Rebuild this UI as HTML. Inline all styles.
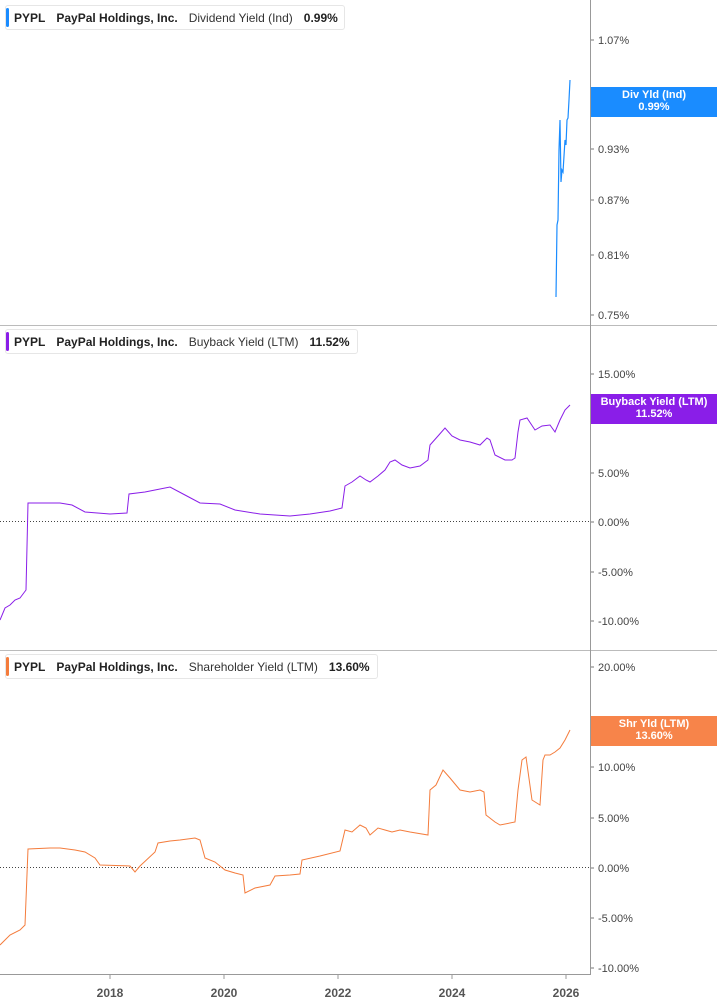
<!DOCTYPE html><html><head><meta charset="utf-8"><style>
body{margin:0;width:717px;height:1005px;background:#fff;font-family:"Liberation Sans",sans-serif;overflow:hidden;position:relative}
svg{position:absolute;left:0;top:0}
.lg{position:absolute;left:5px;height:25px;border:1px solid #e6e6e6;border-radius:3px;background:#fff;font-size:12px;font-weight:bold;color:#222;line-height:25px;padding-left:8px;white-space:nowrap;box-sizing:border-box}
.lg:before{content:"";position:absolute;left:0;top:2px;bottom:2px;width:3px;background:var(--c);border-radius:2px}
.lg span{margin-right:11px}.lg .n{font-weight:normal;color:#333}
.tg{position:absolute;left:591px;width:126px;color:#fff;font-size:11px;font-weight:bold;text-align:center;line-height:12px;padding-top:2px;box-sizing:border-box}
</style></head><body>
<svg width="717" height="1005" font-family="Liberation Sans" font-size="11" fill="#444">
<line x1="0" y1="325.5" x2="717" y2="325.5" stroke="#bbb"/>
<line x1="0" y1="650.5" x2="717" y2="650.5" stroke="#bbb"/>
<line x1="590.5" y1="0" x2="590.5" y2="975" stroke="#999"/>
<line x1="0" y1="974.5" x2="591" y2="974.5" stroke="#999"/>
<line x1="0" y1="521.5" x2="590" y2="521.5" stroke="#444" stroke-dasharray="1,2"/>
<line x1="0" y1="867.5" x2="590" y2="867.5" stroke="#444" stroke-dasharray="1,2"/>
<g stroke="#777">
<line x1="591" y1="40" x2="594" y2="40"/><line x1="591" y1="149" x2="594" y2="149"/><line x1="591" y1="200" x2="594" y2="200"/><line x1="591" y1="255" x2="594" y2="255"/><line x1="591" y1="315" x2="594" y2="315"/>
<line x1="591" y1="374" x2="594" y2="374"/><line x1="591" y1="473" x2="594" y2="473"/><line x1="591" y1="522" x2="594" y2="522"/><line x1="591" y1="572" x2="594" y2="572"/><line x1="591" y1="621" x2="594" y2="621"/>
<line x1="591" y1="667" x2="594" y2="667"/><line x1="591" y1="767" x2="594" y2="767"/><line x1="591" y1="818" x2="594" y2="818"/><line x1="591" y1="868" x2="594" y2="868"/><line x1="591" y1="918" x2="594" y2="918"/><line x1="591" y1="968" x2="594" y2="968"/>
</g>
<g>
<text x="598" y="44">1.07%</text><text x="598" y="153">0.93%</text><text x="598" y="204">0.87%</text><text x="598" y="259">0.81%</text><text x="598" y="319">0.75%</text>
<text x="598" y="378">15.00%</text><text x="598" y="477">5.00%</text><text x="598" y="526">0.00%</text><text x="598" y="576">-5.00%</text><text x="598" y="625">-10.00%</text>
<text x="598" y="671">20.00%</text><text x="598" y="771">10.00%</text><text x="598" y="822">5.00%</text><text x="598" y="872">0.00%</text><text x="598" y="922">-5.00%</text><text x="598" y="972">-10.00%</text>
</g>
<g font-weight="bold" font-size="12" text-anchor="middle" fill="#555">
<text x="110" y="997">2018</text><text x="224" y="997">2020</text><text x="338" y="997">2022</text><text x="452" y="997">2024</text><text x="566" y="997">2026</text></g>
<g stroke="#999"><line x1="110" y1="975" x2="110" y2="979"/><line x1="224" y1="975" x2="224" y2="979"/><line x1="338" y1="975" x2="338" y2="979"/><line x1="452" y1="975" x2="452" y2="979"/><line x1="566" y1="975" x2="566" y2="979"/></g>
<polyline fill="none" stroke="#1a8cff" stroke-width="1.2" points="556,297 557,225 558,220 559,150 560,120 561,182 562,170 563,172 565,140 566,145 567,120 568,118 569,100 570,80"/>
<polyline fill="none" stroke="#8a1ee8" stroke-width="1" points="0,620 5,608 10,605 15,600 20,598 26,590 28,503 60,503 72,505 85,512 110,514 127,513 129,494 145,492 155,490 170,487 185,495 200,503 220,504 235,510 260,514 290,516 310,514 330,511 342,508 345,486 352,482 360,476 366,480 370,482 378,476 385,470 390,462 395,460 402,465 410,468 420,466 428,460 430,445 438,436 445,428 452,436 460,440 470,442 480,445 487,438 490,440 495,455 505,460 512,460 515,458 518,432 520,420 527,418 535,430 542,426 550,425 555,432 560,420 565,410 570,405"/>
<polyline fill="none" stroke="#f47c3c" stroke-width="1" points="0,945 5,940 10,935 20,930 25,925 28,849 50,848 60,848 75,850 85,852 95,858 100,865 130,866 135,872 140,866 155,852 158,843 170,841 180,840 195,838 200,840 205,858 215,862 225,870 235,873 243,875 245,893 255,888 270,885 275,876 290,875 300,874 302,860 320,856 340,851 345,830 352,832 360,825 366,828 370,835 378,828 385,830 392,832 400,830 410,832 428,835 430,790 436,785 443,770 450,778 460,790 470,792 480,790 484,792 486,815 495,822 500,825 515,822 518,790 522,760 526,757 532,800 540,805 543,760 545,755 550,755 555,752 560,748 565,740 570,730"/>
</svg>
<div class="lg" style="top:5px;width:340px;--c:#1a8cff"><span>PYPL</span><span>PayPal Holdings, Inc.</span><span class="n">Dividend Yield (Ind)</span>0.99%</div>
<div class="lg" style="top:329px;width:353px;--c:#8a1ee8"><span>PYPL</span><span>PayPal Holdings, Inc.</span><span class="n">Buyback Yield (LTM)</span>11.52%</div>
<div class="lg" style="top:654px;width:373px;--c:#f47c3c"><span>PYPL</span><span>PayPal Holdings, Inc.</span><span class="n">Shareholder Yield (LTM)</span>13.60%</div>
<div class="tg" style="top:87px;height:30px;background:#1a8cff">Div Yld (Ind)<br>0.99%</div>
<div class="tg" style="top:394px;height:30px;background:#8a1ee8">Buyback Yield (LTM)<br>11.52%</div>
<div class="tg" style="top:716px;height:30px;background:#f7844a">Shr Yld (LTM)<br>13.60%</div>
</body></html>
